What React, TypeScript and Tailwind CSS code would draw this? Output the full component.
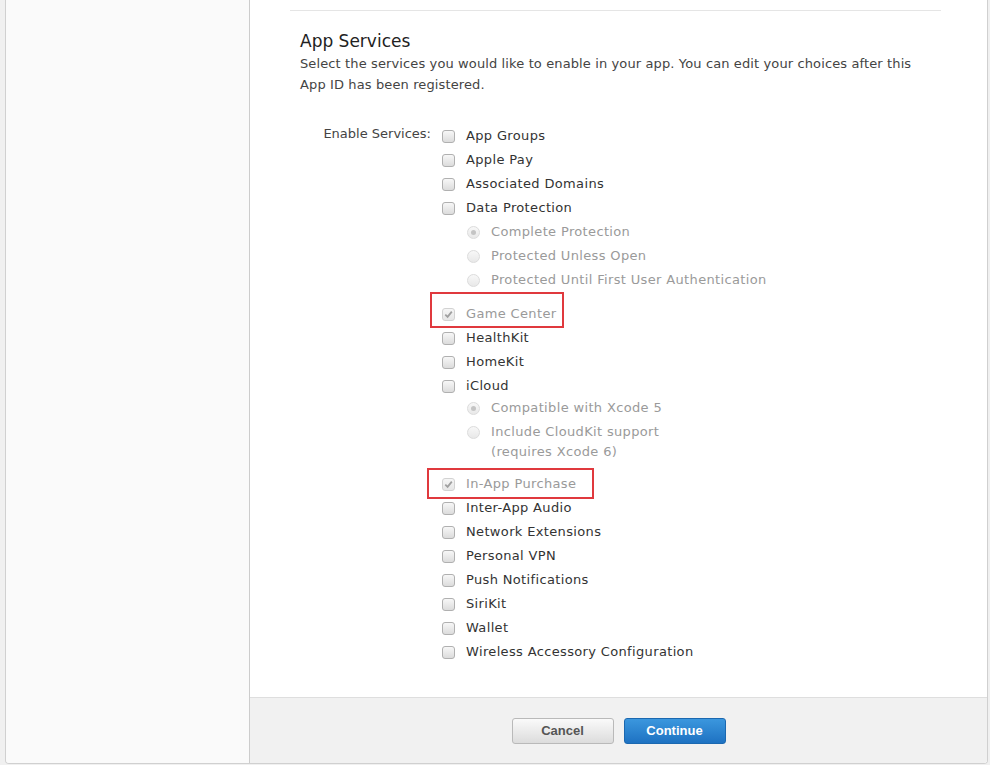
import { ReactNode } from 'react';

type Item = {
  label: string;
  checked?: boolean;
  radios?: { label: ReactNode; selected?: boolean }[];
  highlight?: 'game' | 'iap';
  tight?: boolean;
};

const services: Item[] = [
  { label: 'App Groups' },
  { label: 'Apple Pay' },
  { label: 'Associated Domains' },
  {
    label: 'Data Protection',
    radios: [
      { label: 'Complete Protection', selected: true },
      { label: 'Protected Unless Open' },
      { label: 'Protected Until First User Authentication' },
    ],
  },
  { label: 'Game Center', checked: true, highlight: 'game' },
  { label: 'HealthKit' },
  { label: 'HomeKit' },
  {
    label: 'iCloud',
    tight: true,
    radios: [
      { label: 'Compatible with Xcode 5', selected: true },
      {
        label: (
          <>
            Include CloudKit support
            <br />
            (requires Xcode 6)
          </>
        ),
      },
    ],
  },
  { label: 'In-App Purchase', checked: true, highlight: 'iap' },
  { label: 'Inter-App Audio' },
  { label: 'Network Extensions' },
  { label: 'Personal VPN' },
  { label: 'Push Notifications' },
  { label: 'SiriKit' },
  { label: 'Wallet' },
  { label: 'Wireless Accessory Configuration' },
];

function Checkbox({ checked }: { checked?: boolean }) {
  if (checked) {
    return (
      <span className="w-[13px] h-[13px] shrink-0 rounded-[3px] border border-[#d2d2d2] bg-linear-to-b from-[#f6f6f6] to-[#e6e6e6] flex items-center justify-center">
        <svg width="9" height="9" viewBox="0 0 9 9">
          <path d="M1.3 4.6 L3.6 6.9 L7.8 1.6" fill="none" stroke="#a0a0a0" strokeWidth="1.8" />
        </svg>
      </span>
    );
  }
  return (
    <span className="w-[13px] h-[13px] shrink-0 rounded-[3px] border border-[#b0b0b0] bg-linear-to-b from-[#f7f7f7] to-[#dcdcdc]" />
  );
}

function Radio({ selected }: { selected?: boolean }) {
  return (
    <span className="w-[13px] h-[13px] shrink-0 rounded-full border border-[#dcdcdc] bg-linear-to-b from-[#f8f8f8] to-[#e8e8e8] flex items-center justify-center">
      {selected && <span className="w-[5px] h-[5px] rounded-full bg-[#c4c4c4]" />}
    </span>
  );
}

function ServiceRow({ item }: { item: Item }) {
  const disabled = item.checked;
  return (
    <div className={item.highlight ? 'relative' : ''}>
      {item.highlight === 'game' && (
        <div className="absolute left-[-12px] top-[-10px] w-[134px] h-[36px] border-2 border-[#e0393e]" />
      )}
      {item.highlight === 'iap' && (
        <div className="absolute left-[-15px] top-[-4px] w-[167px] h-[31px] border-2 border-[#e0393e]" />
      )}
      <div className="flex items-center h-[24px]">
        <Checkbox checked={item.checked} />
        <span className={`ml-[11px] tracking-[0.35px] ${disabled ? 'text-[#9a9a9a]' : 'text-[#333]'}`}>{item.label}</span>
      </div>
      {item.radios && (
        <div className="pl-[25px] mb-[10px]">
          {item.radios.map((r, i) => (
            <div
              key={i}
              className={`flex items-start text-[#9a9a9a] ${item.tight ? 'leading-[20px]' : 'leading-[24px]'} ${item.tight && i > 0 ? 'mt-[4px]' : ''}`}
            >
              <span className={item.tight ? 'h-[20px] flex items-center' : 'h-[24px] flex items-center'}>
                <Radio selected={r.selected} />
              </span>
              <span className="ml-[11px] tracking-[0.35px]">{r.label}</span>
            </div>
          ))}
        </div>
      )}
    </div>
  );
}

export default function App() {
  return (
    <div
      className="h-[765px] bg-[#f0f0f0] pl-[5px] pr-[2px] overflow-hidden text-[13px]"
      style={{ fontFamily: '"DejaVu Sans", "Liberation Sans", sans-serif' }}
    >
      <div className="h-[764px] flex border border-t-0 border-[#d0d0d0] rounded-b-[4px] overflow-hidden">
        <aside className="w-[244px] shrink-0 bg-[#fafafa] border-r border-[#cccccc]" />

        <main className="flex-1 flex flex-col bg-white">
          <section className="flex-1 pt-[10px] pl-[40px] pr-[46px]">
            <div className="border-t border-[#e5e5e5] px-[10px] pt-[18px]">
              <h2 className="text-[17px] leading-[24px] text-[#222]">App Services</h2>
              <p className="leading-[21px] text-[#444] tracking-[0.12px]">
                Select the services you would like to enable in your app. You can edit your choices after this App ID has been registered.
              </p>

              <div className="flex mt-[29px]">
                <div className="w-[131px] shrink-0 text-right text-[#444] leading-[20px]">Enable Services:</div>
                <div className="ml-[11px] leading-[24px]">
                  {services.map((s) => (
                    <ServiceRow key={s.label} item={s} />
                  ))}
                </div>
              </div>
            </div>
          </section>

          <footer className="h-[66px] shrink-0 bg-[#f1f1f1] border-t border-[#dedede] flex justify-center gap-[10px] pt-[20px]">
            <button
              className="w-[102px] h-[26px] rounded-[3px] border border-[#b9b9b9] bg-linear-to-b from-[#fafafa] to-[#dcdcdc] text-[#555] text-[13px] font-bold"
              style={{ fontFamily: '"Liberation Sans", sans-serif' }}
            >
              Cancel
            </button>
            <button
              className="w-[102px] h-[26px] rounded-[3px] border border-[#1b68b0] bg-linear-to-b from-[#3b97de] to-[#1e72c2] text-white text-[13px] font-bold"
              style={{ fontFamily: '"Liberation Sans", sans-serif' }}
            >
              Continue
            </button>
          </footer>
        </main>
      </div>
    </div>
  );
}
